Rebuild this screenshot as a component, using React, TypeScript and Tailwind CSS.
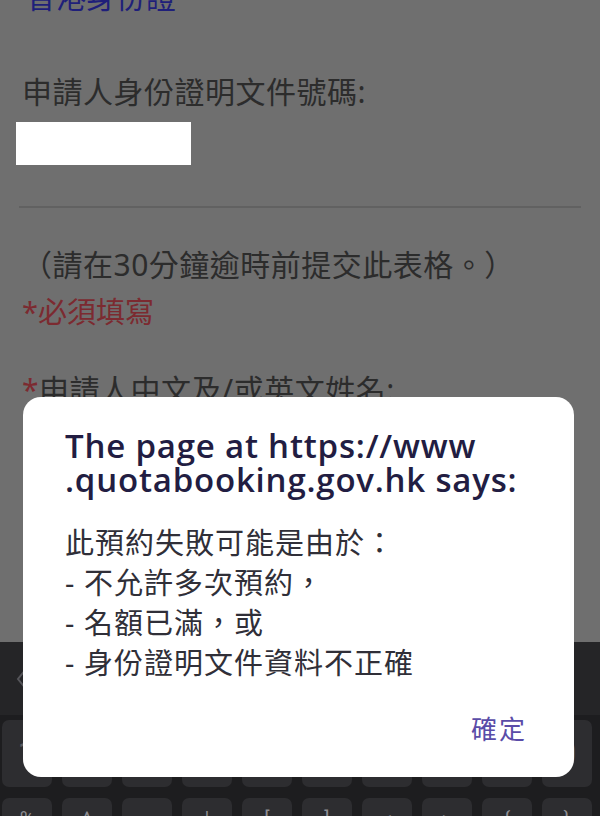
import React from 'react';

const cjk = { fontFamily: '"Noto Sans", "Noto Sans CJK TC", sans-serif' };

const rowOne = ['1', '2', '3', '4', '5', '6', '7', '8', '9', '0'];
const rowTwo = ['%', '^', '~', '|', '[', ']', '<', '>', '{', '}'];

function KeyRow({ keys, className, label }: { keys: string[]; className: string; label: string }) {
  return (
    <div className={`flex shrink-0 gap-[10px] px-[2px] ${className}`}>
      {keys.map((k) => (
        <div
          key={k}
          className={`flex h-[67px] w-[50px] shrink-0 justify-center rounded-[7px] bg-[#2d2d30] ${label}`}
          style={{ fontFamily: '"Roboto", sans-serif' }}
        >
          {k}
        </div>
      ))}
    </div>
  );
}

export default function App() {
  return (
    <div className="relative h-[816px] w-[600px] overflow-hidden bg-[#6f6f6f]" style={cjk}>
      {/* page behind the dimming layer */}
      <div className="flex h-[642px] shrink-0 flex-col">
        <div className="-mt-[21px] pl-[26px] text-[30px] leading-[36px] text-[#1f1f7a]">香港身份證</div>
        <div className="mt-[59px] pl-[22px] text-[30px] leading-[36px] tracking-[0.5px] text-[#2c2c2c]">申請人身份證明文件號碼:</div>
        <div className="ml-[16px] mt-[12px] h-[43px] w-[175px] bg-white" />
        <div className="mx-[19px] mt-[41px] h-[2px] bg-[#616161]" />
        <div className="mt-[39px] pl-[22px] text-[30px] leading-[36px] tracking-[0.5px] text-[#2c2c2c]">（請在30分鐘逾時前提交此表格。）</div>
        <div className="mt-[11px] pl-[22px] text-[29px] leading-[36px] text-[#7c2a30]">*必須填寫</div>
        <div className="mt-[42px] pl-[22px] text-[30px] leading-[36px] tracking-[0.5px] text-[#2c2c2c]">
          <span className="text-[#7c2a30]">*</span>申請人中文及/或英文姓名:
        </div>
      </div>

      {/* keyboard */}
      <div className="flex h-[174px] flex-col overflow-hidden bg-[#1d1d1f]">
        <div className="flex h-[73px] shrink-0 items-center bg-[#252527] pl-[16px] text-[#55555a]">
          <svg width="12" height="24" viewBox="0 0 12 24" fill="none" stroke="currentColor" strokeWidth="2">
            <path d="M10 2 2 12l8 10" />
          </svg>
        </div>
        <KeyRow keys={rowOne} className="mt-[5px]" label="items-center text-[34px] text-[#5c5c60]" />
        <KeyRow keys={rowTwo} className="mt-[11px]" label="pt-[6px] text-[20px] text-[#8e8e93]" />
      </div>

      {/* alert dialog */}
      <div className="absolute left-[23px] top-[397px] flex h-[380px] w-[551px] flex-col rounded-[18px] bg-white pl-[42px] pr-[40px]">
        <div
          className="mt-[32px] text-[33px] font-semibold leading-[34px] tracking-[0.8px] text-[#221d42]"
          style={{ fontFamily: '"Open Sans", "Noto Sans", sans-serif' }}
        >
          The page at https://www
          <br />
          .quotabooking.gov.hk says:
        </div>
        <div className="mt-[26px] text-[29px] leading-[40px] tracking-[1px] text-[#302f38]">
          <div>此預約失敗可能是由於：</div>
          <div>- 不允許多次預約，</div>
          <div>- 名額已滿，或</div>
          <div>- 身份證明文件資料不正確</div>
        </div>
        <div className="mb-[33px] mr-[7px] mt-auto self-end text-[26px] leading-[30px] tracking-[2px] text-[#5a4ca8]">確定</div>
      </div>
    </div>
  );
}
